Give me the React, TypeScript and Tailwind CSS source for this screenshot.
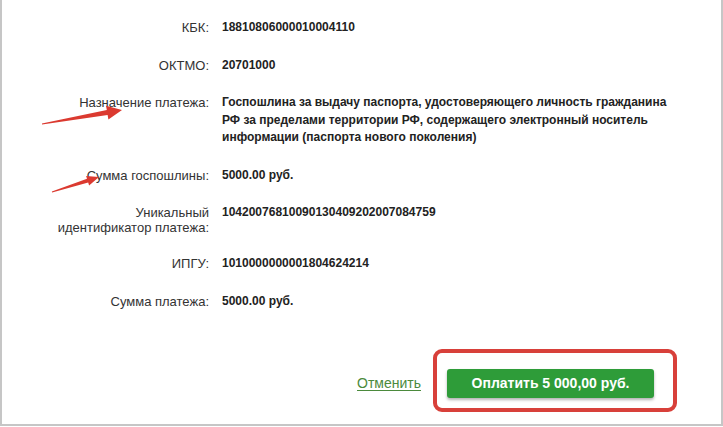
import React from 'react'

const rows = [
  { label: ['КБК:'], value: ['18810806000010004110'] },
  { label: ['ОКТМО:'], value: ['20701000'] },
  {
    label: ['Назначение платежа:'],
    value: [
      'Госпошлина за выдачу паспорта, удостоверяющего личность гражданина',
      'РФ за пределами территории РФ, содержащего электронный носитель',
      'информации (паспорта нового поколения)',
    ],
  },
  { label: ['Сумма госпошлины:'], value: ['5000.00 руб.'] },
  { label: ['Уникальный', 'идентификатор платежа:'], value: ['10420076810090130409202007084759'] },
  { label: ['ИПГУ:'], value: ['1010000000001804624214'] },
  { label: ['Сумма платежа:'], value: ['5000.00 руб.'] },
]

function Arrows() {
  return (
    <svg className="absolute left-0 top-0 pointer-events-none" width="723" height="427">
      <polygon
        fill="#db3a30"
        points="39.9,123.5 104.8,110.1 104,105.7 120,110 106.4,119.5 105.6,115.1 40.1,124.5"
      />
      <polygon
        fill="#db3a30"
        points="49.85,191.5 85,178.7 84.1,175.9 97,177 87.1,185.4 86.2,182.6 50.15,192.5"
      />
    </svg>
  )
}

export default function App() {
  return (
    <div
      className="relative w-[723px] h-[426px] bg-white border-l-2 border-r-2 border-b-2 border-[#c6c6c6] flex flex-col"
      style={{ fontFamily: '"Liberation Sans", Arial, sans-serif' }}
    >
      <div className="pt-[19px] flex flex-col gap-[20px]">
        {rows.map((r) => (
          <div key={r.label[0]} className="flex items-start">
            <div
              className={
                'w-[207px] shrink-0 text-right text-[13px] text-[#333] ' +
                (r.label.length > 1 ? 'leading-[15px] pt-[1px]' : 'leading-[17px]')
              }
            >
              {r.label.map((l) => (
                <div key={l}>{l}</div>
              ))}
            </div>
            <div className="ml-[13px] text-[12px] font-bold leading-[17.5px] text-[#222]">
              {r.value.map((v) => (
                <div key={v}>{v}</div>
              ))}
            </div>
          </div>
        ))}
      </div>

      <div className="mt-[39px] flex items-center justify-end pr-[44px]">
        <a href="#" className="mt-[6px] text-[14px] text-[#4b8a3c] underline underline-offset-2">
          Отменить
        </a>
        <div className="ml-[12px] border-4 border-[#d8403a] rounded-[9px] pl-[10px] pr-[19px] pt-[16px] pb-[10px]">
          <button className="w-[207px] h-[29px] rounded-[3px] bg-[#2e9c39] text-white text-[14px] font-bold shadow-[0_2px_3px_rgba(0,0,0,0.3)]">
            Оплатить 5 000,00 руб.
          </button>
        </div>
      </div>

      <Arrows />
    </div>
  )
}
